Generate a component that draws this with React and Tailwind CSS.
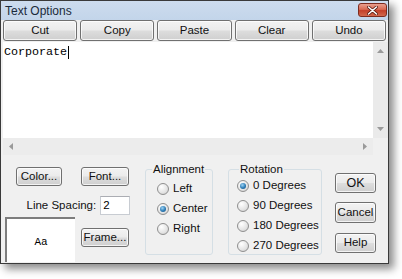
import React from "react";

const btn =
  "flex items-center justify-center rounded-[3px] border border-[#707070] bg-[linear-gradient(#f3f3f3_0%,#ebebeb_48%,#dddddd_52%,#cfcfcf_100%)] shadow-[inset_0_0_0_1px_rgba(255,255,255,0.75)] text-[11.5px] text-[#111] leading-none";

function Radio({ checked, label }) {
  return (
    <div className="flex items-center h-[20px]">
      <div className="w-[12px] h-[12px] rounded-full border border-[#8f8f8f] bg-[radial-gradient(circle_at_35%_30%,#ffffff_0%,#e4e4e4_60%,#c9c9c9_100%)] flex items-center justify-center shrink-0">
        {checked && (
          <div className="w-[6px] h-[6px] rounded-full bg-[radial-gradient(circle_at_40%_35%,#9fd4f5_0%,#2b7bb5_55%,#1c4f7e_100%)]" />
        )}
      </div>
      <span className="ml-[4px] text-[11.5px] text-[#111] leading-none whitespace-nowrap">{label}</span>
    </div>
  );
}

export default function App() {
  return (
    <div className="w-[402px] h-[279px] bg-white font-['Liberation_Sans',Arial,sans-serif]">
      <div className="w-[389px] h-[264px] border border-[#3a3a3a] bg-[#f0f0f0] flex flex-col shadow-[5px_5px_8px_rgba(0,0,0,0.45)]">
        {/* Title bar */}
        <div className="h-[19px] flex items-center justify-between pl-[4px] pr-[1px] bg-[linear-gradient(#cddcee,#c3d5ea)]">
          <span className="text-[12px] text-[#1b2a3b] leading-none">Text Options</span>
          <div className="w-[29px] h-[14px] mb-[1px] rounded-[3px] border border-[#7e2c1f] bg-[linear-gradient(#e9a08f_0%,#d96a52_45%,#c4402a_55%,#d2694e_100%)] flex items-center justify-center">
            <svg width="11" height="9" viewBox="0 0 11 9">
              <path d="M1.5 1 L9.5 8 M9.5 1 L1.5 8" stroke="#5a1a10" strokeWidth="3" strokeLinecap="round" />
              <path d="M1.5 1 L9.5 8 M9.5 1 L1.5 8" stroke="#ffffff" strokeWidth="1.6" strokeLinecap="round" />
            </svg>
          </div>
        </div>

        {/* Button row */}
        <div className="grid grid-cols-5 gap-[3px] pl-[2px] pr-[2px] h-[21px]">
          {["Cut", "Copy", "Paste", "Clear", "Undo"].map((t) => (
            <div key={t} className={btn}>
              {t}
            </div>
          ))}
        </div>

        {/* Text area */}
        <div className="ml-[2px] mt-[1px] flex flex-col">
          <div className="flex h-[96px]">
            <div className="flex-1 bg-white pl-[1px] pt-[3px]">
              <div className="flex items-center">
                <span className="font-['Liberation_Mono',monospace] text-[11.7px] leading-[14px] text-black">Corporate</span>
                <span className="w-px h-[13px] bg-black ml-px" />
              </div>
            </div>
            <div className="w-[15px] bg-[#eaeaea] flex flex-col items-center justify-between py-[7px]">
              <svg width="7" height="4" viewBox="0 0 7 4">
                <path d="M0 4 L3.5 0 L7 4 Z" fill="#9a9a9a" />
              </svg>
              <svg width="7" height="4" viewBox="0 0 7 4">
                <path d="M0 0 L3.5 4 L7 0 Z" fill="#9a9a9a" />
              </svg>
            </div>
          </div>
          <div className="flex h-[17px]">
            <div className="flex-1 bg-[#ececec] flex items-center justify-between px-[6px]">
              <svg width="4" height="7" viewBox="0 0 4 7">
                <path d="M4 0 L0 3.5 L4 7 Z" fill="#9a9a9a" />
              </svg>
              <svg width="4" height="7" viewBox="0 0 4 7">
                <path d="M0 0 L4 3.5 L0 7 Z" fill="#9a9a9a" />
              </svg>
            </div>
            <div className="w-[15px] bg-[#f0f0f0]" />
          </div>
        </div>

        {/* Bottom section */}
        <div className="flex-1 flex">
          {/* Left column */}
          <div className="w-[129px] flex flex-col">
            <div className="flex mt-[12px] ml-[15px] gap-[19px]">
              <div className={btn + " w-[46px] h-[19px]"}>Color...</div>
              <div className={btn + " w-[48px] h-[19px]"}>Font...</div>
            </div>
            <div className="flex items-center mt-[10px] h-[19px]">
              <span className="w-[96px] text-right text-[11.5px] text-[#111] leading-none">Line Spacing:</span>
              <div className="ml-[4px] w-[30px] h-[19px] bg-white border border-[#c8ccd2] border-t-[#abadb3] flex items-center pl-[2px] text-[11.5px] leading-none text-black">
                2
              </div>
            </div>
            <div className="flex mt-[2px]">
              <div className="ml-[4px] w-[70px] h-[45px] bg-white border-l-2 border-t-2 border-[#7d7d7d] flex items-center justify-center">
                <span className="font-['Liberation_Mono',monospace] text-[11px] text-black leading-none mt-[4px]">Aa</span>
              </div>
              <div className={btn + " ml-[6px] mt-[11px] w-[48px] h-[19px]"}>Frame...</div>
            </div>
          </div>

          {/* Alignment */}
          <fieldset className="ml-[15px] mt-[8px] w-[68px] h-[92px] border border-[#d5dfe5] rounded-[3px] pl-[11px] pt-[3px]">
            <legend className="text-[11.5px] text-[#111] leading-[13px] ml-[-5px] px-[1px]">Alignment</legend>
            <Radio label="Left" />
            <Radio label="Center" checked />
            <Radio label="Right" />
          </fieldset>

          {/* Rotation */}
          <fieldset className="ml-[15px] mt-[8px] w-[94px] h-[92px] border border-[#d5dfe5] rounded-[3px] pl-[8px] pt-[0px]">
            <legend className="text-[11.5px] text-[#111] leading-[13px] ml-[2px] px-[1px]">Rotation</legend>
            <Radio label="0 Degrees" checked />
            <Radio label="90 Degrees" />
            <Radio label="180 Degrees" />
            <Radio label="270 Degrees" />
          </fieldset>

          {/* Right buttons */}
          <div className="ml-[13px] w-[41px] flex flex-col">
            <div className={btn + " mt-[18px] h-[20px] border-[#3c7fb1] shadow-[inset_0_0_0_1px_#bfe3f7] text-[12.5px]"}>OK</div>
            <div className={btn + " mt-[9px] h-[21px]"}>Cancel</div>
            <div className={btn + " mt-[10px] h-[20px]"}>Help</div>
          </div>
        </div>
      </div>
    </div>
  );
}
